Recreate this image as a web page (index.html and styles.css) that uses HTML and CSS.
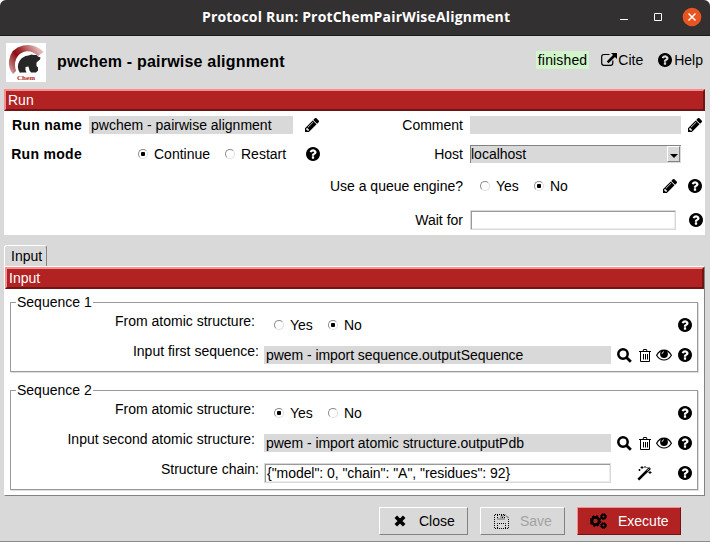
FILE: index.html
```
<!DOCTYPE html>
<html lang="en">
<head>
<meta charset="utf-8">
<title>Protocol Run: ProtChemPairWiseAlignment</title>
<link rel="stylesheet" href="styles.css">
</head>
<body>
<svg class="defs" width="0" height="0">
  <symbol id="help" viewBox="128 128 1536 1536"><path d="M1024 1376v-192q0-14-9-23t-23-9h-192q-14 0-23 9t-9 23v192q0 14 9 23t23 9h192q14 0 23-9t9-23zm256-672q0-88-55.500-163t-138.500-116-170-41q-243 0-371 213-15 24 8 42l132 100q7 6 19 6 16 0 25-12 53-68 86-92 34-24 86-24 48 0 85.500 26t37.500 59q0 38-20 61t-68 45q-63 28-115.500 86.500t-52.500 125.500v36q0 14 9 23t23 9h192q14 0 23-9t9-23q0-19 21.500-49.500t54.500-49.500q32-18 49-28.500t46-35 44.500-48 28-60.500 12.500-81zm384 192q0 209-103 385.500t-279.500 279.500-385.500 103-385.500-103-279.500-279.500-103-385.500 103-385.500 279.500-279.500 385.500-103 385.500 103 279.500 279.500 103 385.500z"/></symbol>
  <symbol id="pencil" viewBox="128 149 1515 1515"><path d="M491 1536l91-91-235-235-91 91v107h128v128h107zm523-928q0-22-22-22-10 0-17 7l-542 542q-7 7-7 17 0 22 22 22 10 0 17-7l542-542q7-7 7-17zm-54-192l416 416-832 832h-416v-416zm683 96q0 53-37 90l-166 166-416-416 166-165q36-38 90-38 53 0 91 38l235 234q37 39 37 91z"/></symbol>
  <symbol id="search" viewBox="0 0 15 15"><circle cx="6" cy="6" r="4.700" fill="none" stroke="#000" stroke-width="2.500"/><path d="M9.500 9.500l4.300 4.300" stroke="#000" stroke-width="2.800"/></symbol>
  <symbol id="trash" viewBox="0 0 12 13"><path d="M0 2.500h12M4 2.500l.5-2h3l.5 2M1.500 3v9.500h9V3M4.500 5v5.500M6.500 5v5.500M8.500 5v5.500" fill="none" stroke="#000" stroke-width="1"/></symbol>
  <symbol id="eye" viewBox="0 0 16 12"><path d="M.6 6.200Q3.500 1.200 8 1.200t7.400 5Q12.500 11 8 11T.6 6.200z" fill="none" stroke="#000" stroke-width="1.200"/><circle cx="8" cy="5" r="3.900"/><path d="M6 5q0-2 2-2.300" fill="none" stroke="#fff" stroke-width=".8"/></symbol>
  <symbol id="wand" viewBox="0 0 15 15"><path d="M1.300 13.700L13 2" fill="none" stroke="#000" stroke-width="2.600"/><path d="M10 4.800l2.200-2.200" stroke="#fff" stroke-width=".8"/><path d="M5 0v3M3.500 1.500h3M8 0v2M2.500 3v2M1.500 4h2M13 5v3M11.500 6.500h3M9.500 1.500h1" stroke="#000" stroke-width="1" fill="none"/></symbol>
  <symbol id="link" viewBox="0 0 16 13"><path d="M8.500 1.500H3Q.7 1.500.7 3.700v6.200Q.7 12.300 3 12.300h6.500q2.300 0 2.300-2.400V7.500" fill="none" stroke="#000" stroke-width="1.200"/><path d="M10 0h6v6l-2-2-6.500 6.200-1.800-1.800L12 2z"/></symbol>
  <symbol id="cross" viewBox="0 0 12 12"><path d="M1.800 1.800l8.400 8.400M10.200 1.800l-8.400 8.400" stroke="#000" stroke-width="3.600" fill="none"/></symbol>
  <symbol id="floppy" viewBox="0 0 15 15"><path d="M1 .5h10l3.500 3.500v10.500H.5V.5M3.500 1v4h7V1M3.500 14V9.500h8V14" fill="none" stroke="#000" stroke-dasharray="1 1"/><path d="M7 1.500h2v2H7z" fill="none" stroke="#000" stroke-dasharray="1 1"/></symbol>
  <symbol id="cogs" viewBox="0 0 17 16"><circle cx="5.500" cy="8" r="3.700" fill="none" stroke="#000" stroke-width="2.800"/><circle cx="5.500" cy="8" r="5" fill="none" stroke="#000" stroke-width="1.700" stroke-dasharray="2 1.927"/><circle cx="13.500" cy="3.500" r="1.900" fill="none" stroke="#000" stroke-width="1.900"/><circle cx="13.500" cy="3.500" r="2.900" fill="none" stroke="#000" stroke-dasharray="1.300 .978"/><circle cx="13.500" cy="12.500" r="1.900" fill="none" stroke="#000" stroke-width="1.900"/><circle cx="13.500" cy="12.500" r="2.900" fill="none" stroke="#000" stroke-dasharray="1.300 .978"/></symbol>
</svg>
<div class="window">
  <div class="titlebar">
    <span class="caption">Protocol Run: ProtChemPairWiseAlignment</span>
    <svg class="controls" width="84" height="20" viewBox="0 0 84 20"><path d="M0 12.500h8M34.500 6.500h7v7h-7z" fill="none" stroke="#fff"/><circle cx="72" cy="10" r="9.300" fill="#e95420"/><path d="M68.500 6.500l7 7M75.500 6.500l-7 7" stroke="#fff" stroke-width="1.500"/></svg>
  </div>
  <header class="header">
    <svg class="logo" width="40" height="39" viewBox="0 0 40 39">
      <defs><linearGradient id="arc" x1="0" y1="1" x2="1" y2=".4"><stop offset="0" stop-color="#dcb4b4"/><stop offset=".45" stop-color="#8b0d12"/><stop offset=".6" stop-color="#9c2a2e"/><stop offset="1" stop-color="#e0b4b4"/></linearGradient></defs>
      <path fill="#fff" d="M0 0h40v39H0z"/>
      <path d="M7 31Q2 25 3 17.500 5 5 17 2.500 29 0 37.500 9L32 13Q25 6.500 17.500 9 10 12 9 20q-.3 4 1 8z" fill="url(#arc)"/>
      <path d="M14 30Q10 24 13.500 18q3-5 9-5.500l3-1 2 .5h3l1.500 1.500 2.500 1-.5 2-3.500 3 0 3.500 1.500 1.500v3l-2 2h-5l-1.500-2-1-4-3 .5v3l1 2.500h-6z" fill="#262626"/>
      <text x="11" y="37" textLength="18" class="logo-text">Chem</text>
    </svg>
    <h1>pwchem - pairwise alignment</h1>
    <span class="status">finished</span>
    <span class="action cite"><svg width="16" height="13"><use href="#link"/></svg>Cite</span>
    <span class="action"><svg width="14" height="14"><use href="#help"/></svg>Help</span>
  </header>

  <section class="run">
    <div class="bar">Run</div>
    <div class="run-body">
      <div class="run-left">
        <div class="row"><b class="label">Run name</b><span class="entry">pwchem - pairwise alignment</span><span class="tools pen"><svg width="14" height="14"><use href="#pencil"/></svg></span></div>
        <div class="row"><b class="label">Run mode</b><span class="radios"><i class="radio on"></i><span class="opt-continue">Continue</span><i class="radio"></i><span>Restart</span></span><span class="tools"><svg width="14" height="14"><use href="#help"/></svg></span></div>
      </div>
      <div class="run-right">
        <div class="row"><span class="label">Comment</span><span class="entry"></span><span class="tools"><svg width="14" height="14"><use href="#pencil"/></svg></span></div>
        <div class="row"><span class="label">Host</span><span class="combo">localhost<i class="arrow"></i></span></div>
        <div class="row"><span class="label">Use a queue engine?</span><span class="radios"><i class="radio"></i><span class="opt">Yes</span><i class="radio on"></i><span>No</span></span><span class="tools"><svg width="14" height="14"><use href="#pencil"/></svg><svg width="14" height="14"><use href="#help"/></svg></span></div>
        <div class="row wait"><span class="label">Wait for</span><span class="input"></span><span class="tools"><svg width="14" height="14"><use href="#help"/></svg></span></div>
      </div>
    </div>
  </section>

  <div class="tab">Input</div>
  <section class="notebook">
    <div class="bar">Input</div>
    <fieldset class="group first">
      <legend>Sequence 1</legend>
      <div class="field"><span class="name inset">From atomic structure:</span><span class="radios"><i class="radio"></i><span class="opt">Yes</span><i class="radio on"></i><span>No</span></span><span class="tools"><svg width="14" height="14"><use href="#help"/></svg></span></div>
      <div class="field"><span class="name">Input first sequence:</span><span class="entry">pwem - import sequence.outputSequence</span><span class="tools"><svg width="15" height="15"><use href="#search"/></svg><svg class="trash" width="12" height="13"><use href="#trash"/></svg><svg width="16" height="12"><use href="#eye"/></svg><svg width="14" height="14"><use href="#help"/></svg></span></div>
    </fieldset>
    <fieldset class="group second">
      <legend>Sequence 2</legend>
      <div class="field"><span class="name inset">From atomic structure:</span><span class="radios"><i class="radio on"></i><span class="opt">Yes</span><i class="radio"></i><span>No</span></span><span class="tools"><svg width="14" height="14"><use href="#help"/></svg></span></div>
      <div class="field"><span class="name inset">Input second atomic structure:</span><span class="entry">pwem - import atomic structure.outputPdb</span><span class="tools"><svg width="15" height="15"><use href="#search"/></svg><svg class="trash" width="12" height="13"><use href="#trash"/></svg><svg width="16" height="12"><use href="#eye"/></svg><svg width="14" height="14"><use href="#help"/></svg></span></div>
      <div class="field"><span class="name">Structure chain:</span><span class="input">{"model": 0, "chain": "A", "residues": 92}</span><span class="tools"><svg class="wand" width="15" height="15"><use href="#wand"/></svg><svg width="14" height="14"><use href="#help"/></svg></span></div>
    </fieldset>
  </section>

  <footer class="footer">
    <div class="button close"><svg width="12" height="12"><use href="#cross"/></svg>Close</div>
    <div class="button save"><svg width="15" height="15"><use href="#floppy"/></svg>Save</div>
    <div class="button execute"><svg width="17" height="16"><use href="#cogs"/></svg>Execute</div>
  </footer>
</div>
</body>
</html>
```
FILE: styles.css
```
* { box-sizing: border-box; }
body {
  margin: 0;
  background: #fff;
  color: #000;
  font: 14px/18px "Liberation Sans", Arial, sans-serif;
  white-space: nowrap;
}
.defs { display: block; height: 0; }
svg { display: block; flex: none; }
.window {
  width: 710px;
  height: 542px;
  display: flex;
  flex-direction: column;
  background: #d9d9d9;
  border-bottom: 1px solid #8c8c8c;
  border-radius: 6px 6px 0 0;
  overflow: hidden;
}
.titlebar {
  height: 36px;
  flex: none;
  display: flex;
  align-items: center;
  padding: 0 6px 1px 202px;
  background: #333031;
  border-bottom: 1px solid #1c1b1b;
  color: #fff;
}
.caption { font: bold 14px/20px "Open Sans", sans-serif; letter-spacing: .18px; }
.controls { margin-left: auto; margin-right: 0; }
.header {
  height: 53px;
  flex: none;
  display: flex;
  align-items: center;
  padding: 0 7px 6px 6px;
}
.logo { margin-top: 6px; }
.logo-text { font: bold 7px "Liberation Serif", serif; fill: #b22222; }
h1 { margin: 5px 0 0 11px; font-size: 16px; line-height: 20px; letter-spacing: .2px; }
.status { margin-left: auto; padding: 0 2px; background: #d2f5cb; letter-spacing: .15px; }
.action { display: flex; align-items: center; gap: 2px; margin-left: 15px; }
.cite { margin-left: 12px; gap: 1px; }

.bar {
  height: 22px;
  padding-left: 2px;
  line-height: 18px;
  color: #fff;
  background: #b22222;
  border: 2px solid;
  border-color: #f98e8e #701515 #701515 #f98e8e;
}
.run { margin: 0 5px 0 4px; height: 146px; flex: none; background: #fff; }
.run-body { display: flex; }
.run-left { width: 316px; }
.run-right { width: 385px; }
.row { display: flex; align-items: center; height: 28px; }
.row:nth-child(2) { height: 30px; }
.row:nth-child(3) { height: 34px; }
.row:nth-child(4) { height: 34px; }
.label { flex: none; text-align: right; }
.run-left .label { width: 78px; margin-right: 7px; letter-spacing: .3px; }
.run-right .label { width: 143px; margin-right: 7px; }
.entry { height: 18px; padding-left: 2px; background: #d9d9d9; }
.run-left .entry { width: 204px; }
.run-right .entry { width: 211px; }
.tools { display: flex; align-items: center; margin-left: auto; }
.run-left .pen { margin-right: 1px; }
.run-right .tools { gap: 11px; margin-right: 3px; }
.run-right .wait .tools { margin-right: 2px; }
.combo {
  width: 211px;
  height: 18px;
  display: flex;
  line-height: 17px;
  background: #d9d9d9;
  border: 1px solid #828282;
  border-width: 1px 0 0 1px;
}
.arrow {
  width: 13px;
  height: 16px;
  margin: 0 1px 0 auto;
  border: 1px solid;
  border-color: #fff #828282 #828282 #fff;
  display: flex;
  align-items: center;
  justify-content: center;
}
.arrow::after {
  content: "";
  margin-top: 4px;
  border: 4px solid transparent;
  border-width: 4px 4px 0;
  border-top-color: #000;
}
.input {
  height: 20px;
  line-height: 16px;
  padding-left: 1px;
  background: #fff;
  border: 1px solid #d9d9d9;
  box-shadow: inset 1px 1px #999, inset -1px -1px #ececec;
  padding: 1px 0 0 2px;
}
.run-right .input { width: 206px; }
.radios { display: flex; align-items: center; }
.run-left .radios { margin-left: 49px; }
.run-right .radios { margin-left: 10px; }
.radio {
  width: 10px;
  height: 10px;
  margin-right: 6px;
  border: 1px solid;
  border-color: #8a8a8a #dedede #dedede #8a8a8a;
  border-radius: 50%;
  display: grid;
  place-items: center;
}
.radio.on::after { content: ""; width: 4px; height: 4px; border-radius: 1px; background: #000; }
.opt { width: 38px; }
.opt-continue { width: 71px; }

.tab {
  width: 43px;
  height: 21px;
  flex: none;
  margin: 10px 0 0 4px;
  padding-left: 6px;
  line-height: 20px;
  border: 1px solid;
  border-color: #fff #828282 transparent #fff;
  border-bottom: 0;
  border-radius: 3px 3px 0 0;
}
.notebook {
  height: 230px;
  flex: none;
  margin: 0 5px 0 4px;
  background: #fff;
  border: 1px solid;
  border-color: #fff #828282 #828282 #fff;
}
.group {
  min-width: 0;
  margin: 0 6px 0 5px;
  padding: 0;
  border: 1px solid #999;
  box-shadow: 1px 1px #dedede;
}
.group.first { height: 79px; margin-top: 4px; }
.group.second { height: 109px; margin-top: 9px; }
legend { height: 18px; margin-left: 5px; padding: 0 1px; background: #fff; }
.field { display: flex; align-items: center; height: 30px; }
.group .field:nth-child(2) { margin-top: -1px; }
.name { width: 248px; flex: none; text-align: right; margin-bottom: 8px; }
.name.inset { width: 244px; margin-right: 4px; }
.field .entry, .field .input { width: 347px; margin-left: 5px; }
.field .entry { letter-spacing: -.05px; }
.field .input { letter-spacing: -.05px; }
.field .radios { margin-left: 15px; }
.field .tools { gap: 6px; margin-right: 5px; }
.field .tools .wand { margin-right: 20px; }
.trash { margin: 0 -1px 0 1px; }

.footer { display: flex; align-items: flex-start; padding: 11px 0 0 379px; }
.button {
  height: 28px;
  display: flex;
  align-items: center;
  border: 1px solid;
  border-color: #fff #828282 #828282 #fff;
}
.close { width: 89px; padding-left: 14px; gap: 13px; }
.save { width: 85px; margin-left: 12px; padding-left: 13px; gap: 11px; color: #a3a3a3; }
.execute { width: 104px; margin-left: 12px; padding-left: 12px; gap: 11px; color: #fff; background: #b22222; border-color: #f98e8e #701515 #701515 #f98e8e; }
```
